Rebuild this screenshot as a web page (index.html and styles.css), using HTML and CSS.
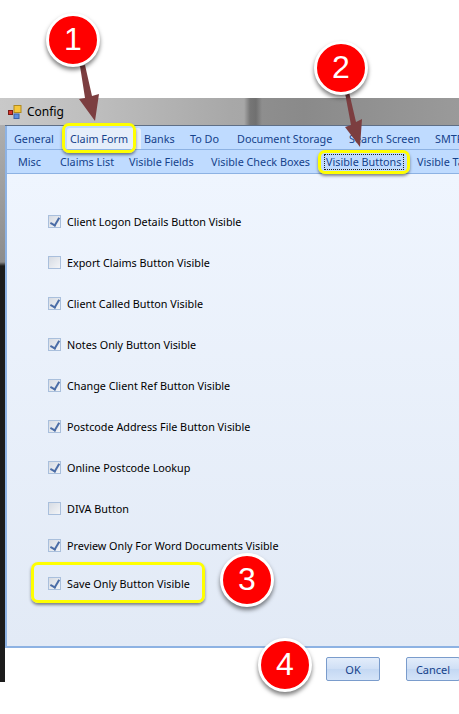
FILE: index.html
```html
<!DOCTYPE html>
<html lang="en">
<head>
    <meta charset="UTF-8">
    <meta name="viewport" content="width=device-width, initial-scale=1.0">
    <title>Config</title>
    <link rel="stylesheet" href="styles.css">
</head>
<body>
    <div class="window">
        <div class="titlebar">
            <svg class="app-icon" width="14" height="14" viewBox="0 0 14 14">
                <rect x="6" y="0.5" width="7" height="7" fill="#f5c73c" stroke="#b08a20"/>
                <rect x="0.5" y="5.5" width="4" height="4" fill="#d8352a" stroke="#7a1c16"/>
                <rect x="6" y="9" width="5" height="4.5" fill="#5c8fe0" stroke="#3a63a8"/>
            </svg>
            <span class="title-text">Config</span>
            <div class="title-blur"></div>
        </div>
        <div class="client">
            <div class="tabs tabs-top">
                <span class="tab t-general">General</span>
                <span class="tab tab-active t-claim">Claim Form</span>
                <span class="tab t-banks">Banks</span>
                <span class="tab t-todo">To Do</span>
                <span class="tab t-docs">Document Storage</span>
                <span class="tab t-search">Search Screen</span>
                <span class="tab">SMTP</span>
            </div>
            <div class="tabs tabs-sub">
                <span class="tab t-misc">Misc</span>
                <span class="tab t-list">Claims List</span>
                <span class="tab t-fields">Visible Fields</span>
                <span class="tab t-boxes">Visible Check Boxes</span>
                <span class="tab t-buttons">Visible Buttons</span>
                <span class="tab">Visible Tabs</span>
            </div>
            <div class="panel">
                <label class="row"><span class="check on"></span>Client Logon Details Button Visible</label>
                <label class="row"><span class="check"></span>Export Claims Button Visible</label>
                <label class="row"><span class="check on"></span>Client Called Button Visible</label>
                <label class="row"><span class="check on"></span>Notes Only Button Visible</label>
                <label class="row"><span class="check on"></span>Change Client Ref Button Visible</label>
                <label class="row"><span class="check on"></span>Postcode Address File Button Visible</label>
                <label class="row"><span class="check on"></span>Online Postcode Lookup</label>
                <label class="row"><span class="check"></span>DIVA Button</label>
                <label class="row row-short row-preview"><span class="check on"></span>Preview Only For Word Documents Visible</label>
                <label class="row row-short"><span class="check on"></span>Save Only Button Visible</label>
            </div>
            <div class="footer">
                <button class="btn">OK</button>
                <button class="btn btn-cancel">Cancel</button>
            </div>
        </div>
    </div>

    <!-- annotations on top of the screenshot -->
    <div class="mark mark-1"></div>
    <div class="mark mark-2"></div>
    <div class="mark mark-3"></div>

    <svg class="arrows" width="459" height="714" viewBox="0 0 459 714">
        <g fill="#7c3e40">
            <path d="M80 66 L85 65 L92 96 L99 94 L95 121 L79 99 L85 98 Z"/>
            <path d="M345 93 L349 92 L356 122 L362 119 L360 147 L345 127 L351 125 Z"/>
        </g>
    </svg>

    <div class="badge badge-1">1</div>
    <div class="badge badge-2">2</div>
    <div class="badge badge-3">3</div>
    <div class="badge badge-4">4</div>
</body>
</html>
```

FILE: styles.css
```css
* {
    margin: 0;
    padding: 0;
    box-sizing: border-box;
}

body {
    background-color: #ffffff;
    font-family: 'Noto Sans', 'Open Sans', sans-serif;
    width: 459px;
    height: 714px;
    overflow: hidden;
    position: relative;
}

.window {
    margin-top: 98px;
    height: 584px;
    display: flex;
    flex-direction: column;
    background: linear-gradient(180deg, #b5b5b5 0, #8c8c8c 164px, #1c1c1c 168px, #1c1c1c 100%);
}

.titlebar {
    height: 27px;
    flex: none;
    display: flex;
    align-items: center;
    gap: 5px;
    padding-left: 8px;
    position: relative;
    background: linear-gradient(90deg, #c9c9c9 0, #bdbdbd 100px, #a8a8a8 230px, #979797 100%);
}

.app-icon {
    flex: none;
    position: relative;
    z-index: 1;
}

.title-text {
    font-size: 12px;
    color: #000000;
    position: relative;
    z-index: 1;
}

.title-blur {
    position: absolute;
    left: 244px;
    right: 0;
    top: 0;
    bottom: 0;
    background: linear-gradient(90deg, #a8a8a8 0, #767676 6px, #707070 12px, #8e8e8e 18px, #8a8a8a 60px, #9a9a9a 100%);
}

.client {
    flex: 1;
    margin-left: 5px;
    display: flex;
    flex-direction: column;
    min-height: 0;
    background-color: #ffffff;
    border-top: 1px solid #5f6f86;
}

.tabs {
    height: 24px;
    flex: none;
    display: flex;
    align-items: center;
    background-color: #bfdbff;
    border-bottom: 1px solid #8db2e3;
    border-left: 2px solid #8db2e3;
    white-space: nowrap;
    overflow: hidden;
    font-size: 10.8px;
    color: #15428b;
}

.tabs-top {
    padding-left: 7px;
    padding-top: 2px;
}

.tabs-sub {
    padding-left: 11px;
}

.tab {
    flex: none;
}

.t-general { width: 56px; }
.t-banks { width: 46px; }
.t-todo { width: 47px; }
.t-docs { width: 112px; }
.t-search { width: 86px; }
.t-misc { width: 42px; }
.t-list { width: 69px; }
.t-fields { width: 82px; }
.t-boxes { width: 115px; }
.t-buttons { width: 91px; }

.tab-active {
    width: 74px;
    height: 21px;
    line-height: 21px;
    margin-left: -3px;
    padding-left: 3px;
    margin-right: 3px;
    background-color: #e6eefa;
    border-radius: 3px 3px 0 0;
}

.panel {
    height: 474px;
    flex: none;
    padding-top: 27px;
    display: flex;
    flex-direction: column;
    border-left: 2px solid #8db2e3;
    border-bottom: 2px solid #8db2e3;
    background: linear-gradient(180deg, #eff5fe 0, #e2eaf6 100%);
}

.row {
    height: 41px;
    flex: none;
    display: flex;
    align-items: center;
    gap: 6px;
    padding-left: 41px;
    font-size: 10.8px;
    color: #000000;
    align-self: flex-start;
}

.row-short {
    height: 38px;
}

.row-preview {
    margin-top: -3px;
}

.check {
    width: 13px;
    height: 13px;
    flex: none;
    border: 1px solid #a9bfdc;
    background: linear-gradient(135deg, #d6dbe3, #f3f5f8);
    position: relative;
}

.check.on::after {
    content: '';
    position: absolute;
    left: 3px;
    top: 0;
    width: 4px;
    height: 8px;
    border: solid #4a6ca6;
    border-width: 0 2px 2px 0;
    transform: rotate(30deg);
}

.footer {
    flex: 1;
    display: flex;
    align-items: flex-start;
    gap: 26px;
    padding: 9px 0 0 321px;
    overflow: hidden;
}

.btn {
    width: 54px;
    height: 24px;
    flex: none;
    font-family: inherit;
    font-size: 11px;
    color: #15428b;
    border: 1px solid #7a9ccc;
    border-radius: 2px;
    background: linear-gradient(180deg, #e3edfb 0, #cfdff5 50%, #c4d8f3 51%, #d5e4f8 100%);
}

/* Annotations */
.mark {
    position: absolute;
    border: 3px solid #ffff00;
    border-radius: 7px;
    box-shadow: 0 2px 3px rgba(0, 0, 0, 0.45);
}

.mark-1 {
    left: 62px;
    top: 123px;
    width: 74px;
    height: 30px;
}

.mark-2 {
    left: 318px;
    top: 150px;
    width: 92px;
    height: 24px;
}

.mark-2::after {
    content: '';
    position: absolute;
    inset: 1px 3px;
    border: 1px dotted #222222;
}

.mark-3 {
    left: 31px;
    top: 562px;
    width: 174px;
    height: 41px;
}

.arrows {
    position: absolute;
    left: 0;
    top: 0;
}

.badge {
    position: absolute;
    width: 54px;
    height: 54px;
    border: 3px solid #ffffff;
    border-radius: 50%;
    background-color: #ff0000;
    color: #ffffff;
    font-family: 'Liberation Sans', Arial, sans-serif;
    font-size: 32px;
    line-height: 47px;
    text-align: center;
    box-shadow: 0 3px 4px rgba(0, 0, 0, 0.5);
}

.badge-1 { left: 46px; top: 13px; }
.badge-2 { left: 314px; top: 41px; }
.badge-3 { left: 220px; top: 553px; }
.badge-4 { left: 258px; top: 638px; }
```
